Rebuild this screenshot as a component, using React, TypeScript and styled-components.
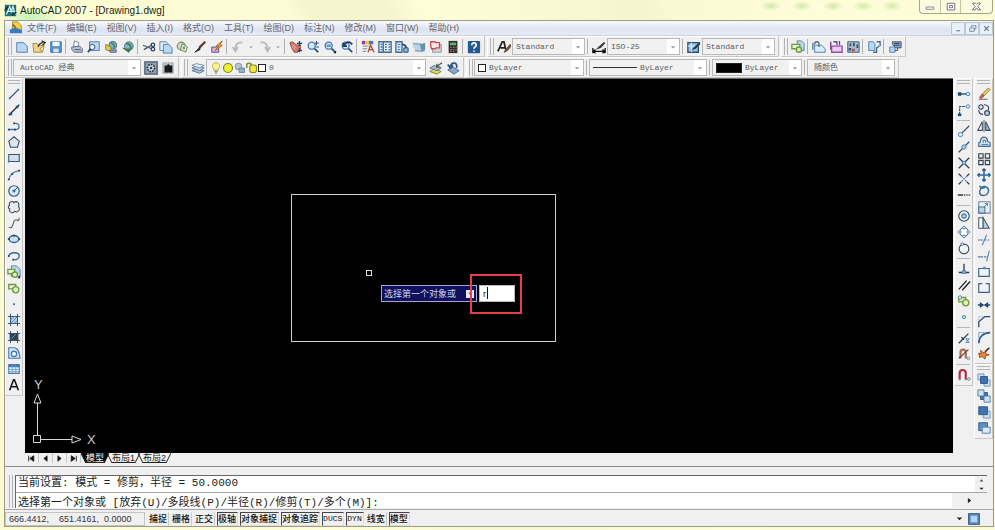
import React, { Fragment, ReactNode } from 'react';
import styled, { createGlobalStyle, css } from 'styled-components';

const UI = '"Liberation Sans", "Noto Sans CJK SC", sans-serif';
const MONO = '"Liberation Mono", "Noto Sans CJK SC", monospace';
const navy = '#24486c';
const blue = '#4379b0';
const pale = '#bcd8f0';
const green = '#6c9a3c';

const GlobalStyle = createGlobalStyle`
  *, *::before, *::after { box-sizing: border-box; }
  html, body { margin: 0; background: #fcfcd4; }
  button, select, input { font: inherit; color: inherit; margin: 0; padding: 0; border: 0; background: none; border-radius: 0; }
`;

/* ---------- icon drawings, all on a 16 x 16 grid ---------- */

const sheet = <path d="M2 3h8l4 4v7H2z" fill={pale} stroke={blue} />;
const magnifier = (
  <>
    <path d="M9 9l5 5" stroke={navy} strokeWidth="2" />
    <circle cx="6.500" cy="6.500" r="4" fill="#d8eafa" stroke={blue} strokeWidth="1.500" />
  </>
);
const blockShapes = (
  <>
    <path d="M2 4h8v5H2z" fill="#e8f4d8" stroke={green} strokeWidth="1.500" />
    <circle cx="10" cy="10" r="3.500" fill="#e2f0c8" stroke={green} strokeWidth="1.500" />
  </>
);
const hatchFrame = (
  <path d="M4 1v14M12 1v14M1 4h14M1 12h14" stroke={navy} />
);

const icons: Record<string, ReactNode> = {
  app: (
    <>
      <path d="M1 1h14v14H1z" fill="#1d6f7a" />
      <path d="M3 13L7 3l2 6 2-6 3 10M4 9h9" stroke="#d6f4f4" strokeWidth="1.500" />
      <path d="M1 8l4-5M10 14l5-4" stroke="#0b3450" strokeWidth="2" />
    </>
  ),
  drawing: (
    <>
      <path d="M4 1h6l4 4v7H4z" fill="#f4d04a" stroke="#b08820" />
      <path d="M1 10c4-3 10-3 14 1v3H1z" fill="#3b7cc0" />
      <path d="M4 4l4 4" stroke="#806818" strokeWidth="2" />
    </>
  ),
  newFile: sheet,
  open: (
    <>
      <path d="M1 4h5l1 2h6l-2 8H2z" fill="#ead58c" stroke="#9c8438" />
      <path d="M7 8c1-4 3-5 6-5M11 1l4 2-3 3" stroke="#3b3b2c" strokeWidth="1.500" />
      <path d="M9 10l5-4-2 8z" fill="#f7edb8" stroke="#9c8438" />
    </>
  ),
  save: (
    <>
      <path d="M2 2h12v12H2z" fill="#5b93c8" stroke="#2f6698" />
      <path d="M4 2h8v5H4z" fill="#eef6fc" />
      <path d="M5 10h6v4H5z" fill="#d6e4f0" />
    </>
  ),
  print: (
    <>
      <path d="M5 1l5 2-1 5H4z" fill="#fff" stroke="#68748c" />
      <path d="M2 8l9-1 3 3v4H5l-3-3z" fill="#b8bfd0" stroke="#59647e" />
      <path d="M5 11h7" stroke="#40506c" />
    </>
  ),
  preview: (
    <>
      <path d="M3 2h11v10H3z" fill={pale} stroke={blue} />
      <circle cx="6" cy="8" r="3" fill="#e8f4ff" stroke={navy} />
      <path d="M4 10l-3 4" stroke={navy} strokeWidth="2" />
    </>
  ),
  publish: (
    <>
      <circle cx="10" cy="6" r="4.500" fill="#7daed0" stroke="#3c6c94" />
      <path d="M8 3c3 1 4 3 4 6" stroke="#4a8c4a" strokeWidth="2" />
      <path d="M2 5l6 3v5l-6-2z" fill="#efc94c" stroke="#8c7424" />
      <path d="M6 12l8-1v3H7z" fill="#9aa4b4" stroke="#59647e" />
    </>
  ),
  dwf: (
    <>
      <circle cx="9" cy="7" r="5" fill="#8cb4c8" stroke="#47738c" />
      <path d="M6 4c4 0 6 3 5 7" stroke="#3f8c50" strokeWidth="2.500" />
      <path d="M2 9l7 5 1-4" fill="#4a7c50" stroke="#345c40" />
    </>
  ),
  cut: (
    <>
      <path d="M1 6l10 4M2 11l9-5" stroke="#4c5866" strokeWidth="1.500" />
      <circle cx="12.500" cy="5.500" r="2" stroke={navy} strokeWidth="1.500" />
      <circle cx="12.500" cy="10.500" r="2" stroke={navy} strokeWidth="1.500" />
    </>
  ),
  copy: (
    <>
      <path d="M1 2h7l3 3v7H1z" fill="#e6f1fa" stroke={blue} />
      <path d="M5 5h6l4 4v6H5z" fill={pale} stroke={blue} />
    </>
  ),
  paste: (
    <>
      <circle cx="6" cy="7" r="4.500" fill="#d4dcc4" stroke="#7c9464" strokeWidth="1.500" />
      <path d="M7 4l6 4-2 6-6-3z" fill="#e2e8dc" stroke="#66785c" />
      <circle cx="9" cy="9" r="1.500" fill="#7c9464" />
    </>
  ),
  match: (
    <>
      <path d="M14 2L7 9" stroke="#5c3c28" strokeWidth="2.500" />
      <path d="M8 8l-6 6 6-3z" fill="#3a2c28" stroke="#3a2c28" />
    </>
  ),
  blockEdit: (
    <>
      <path d="M2 8h8v6H2z" fill="#d0b4e0" stroke="#643c78" />
      <path d="M14 1L7 7h3l-4 5 8-6h-3z" fill="#f6c42c" stroke="#a05c10" />
    </>
  ),
  undo: <path d="M13 3C7 2 5 6 5 11M2 8l3 5 3-5" stroke="#b4b8bc" strokeWidth="2" />,
  redo: <path d="M3 3c6-1 8 3 8 8M8 8l3 5 3-5" stroke="#b4b8bc" strokeWidth="2" />,
  pan: (
    <>
      <path d="M1 3l3-1 5 4h4v5l-3 3H6L3 9z" fill="#d4786c" stroke="#964038" />
      <path d="M4 5l4 4M3 7l4 4" stroke="#f0b8ac" />
      <path d="M12 1v6M9 4h6M12 9v5M10 12h5" stroke={navy} strokeWidth="1.500" />
    </>
  ),
  zoomRt: (
    <>
      {magnifier}
      <path d="M12 1v5M10 3.500h5M11 8h4" stroke={navy} />
    </>
  ),
  zoomWin: (
    <>
      {magnifier}
      <path d="M4 5h5v3H4z" fill="#6c9cc8" />
      <path d="M15 12v3h-3z" fill="#111" />
    </>
  ),
  zoomPrev: (
    <>
      {magnifier}
      <path d="M14 5C11 1 7 2 5 6M4 3v4h4" stroke="#1d3c64" strokeWidth="2" />
    </>
  ),
  properties: (
    <>
      <path d="M1 1h4v4H1z" fill="#a03ca0" />
      <path d="M5 1h4v4H5z" fill="#e8c828" />
      <path d="M9 1h5v4H9z" fill="#4878d0" />
      <path d="M2 7h7M2 10h5M2 13h4" stroke="#6c7c90" />
      <path d="M8 14l3-8 4 8M9 11h5" stroke="#b04838" strokeWidth="1.500" />
    </>
  ),
  designCenter: (
    <>
      <path d="M1 2h14v12H1z" fill="#e2eef8" stroke="#44688c" strokeWidth="1.500" />
      <path d="M6 2v12M3 5h2M3 8h2M3 11h2M8 5h2M12 5h2M8 8h2M12 8h2M8 11h2M12 11h2" stroke="#3c6c98" strokeWidth="1.500" />
    </>
  ),
  palettes: (
    <>
      <path d="M1 2h7v12H1z" fill="#d8e8f6" stroke="#3c6c98" strokeWidth="1.500" />
      <path d="M3 5h3M3 8h3M3 11h3" stroke="#3c6c98" />
      <path d="M8 5c4 0 5 2 5 6" stroke={navy} strokeWidth="2" />
      <path d="M10 9h5v5h-5z" fill="#8cb0d0" stroke={navy} />
    </>
  ),
  sheetSet: (
    <>
      <path d="M1 3h9l5 6v5H6L1 8z" fill="#bcd4e4" />
      <path d="M1 4l9 1 4 3M3 12l10 1" stroke="#8ca8bc" strokeWidth="1.500" />
      <path d="M9 5l6-2v8l-4 2z" fill="#5f93a8" />
    </>
  ),
  markup: (
    <>
      <path d="M4 5h10v9H4z" fill="#d0d4da" stroke="#8c949c" />
      <path d="M2 2h5l1 1h4v6H8l-1 1H3L2 7z" fill="#fbe4e4" stroke="#d04850" strokeWidth="1.500" />
    </>
  ),
  calc: (
    <>
      <path d="M3 1h10v14H3z" fill="#2b3030" />
      <path d="M4.500 3h7v3h-7z" fill="#6cb070" />
      <path d="M5 8.500h1.500M8 8.500h1.500M11 8.500h1M5 11h1.500M8 11h1.500M11 11h1M5 13h1.500M8 13h1.500" stroke="#d06c60" strokeWidth="1.500" />
    </>
  ),
  help: (
    <>
      <rect x="1" y="1" width="14" height="14" rx="1" fill="#235a94" />
      <path d="M5.500 6c0-4 5.500-3 5 0 0 2-2.500 1.500-2.500 4M8 12v1.500" stroke="#fff" strokeWidth="2" />
    </>
  ),
  textStyle: (
    <>
      <path d="M1 13L6 2h2l2 9M4 9h5" stroke="#222" strokeWidth="2" />
      <path d="M15 5l-5 6-2 3 4-2 4-5z" fill="#7b5c44" stroke="#493c30" />
    </>
  ),
  dimStyle: (
    <>
      <path d="M1 9v6M15 9v6M1 13h14M4 11l-3 2 3 2M12 11l3 2-3 2" stroke="#111" strokeWidth="1.500" />
      <path d="M14 2L8 7l-4 4 6-2 5-5z" fill="#3f3b37" />
    </>
  ),
  tableStyle: (
    <>
      <path d="M1 3h12v11H1z" fill="#9cc0e4" stroke="#284c78" strokeWidth="1.500" />
      <path d="M1 7h12M5 3v11" stroke="#eef6fc" />
      <path d="M15 2L8 8l-3 4 5-2 5-5z" fill="#2c3c50" />
    </>
  ),
  insertBlock: (
    <>
      <path d="M7 1h5l3 3v8H7z" fill={pale} stroke={blue} />
      <path d="M1 5h9v5H1z" fill="#e8f4d8" stroke={green} strokeWidth="1.500" />
      <circle cx="9" cy="11" r="3" fill="#d8eab8" stroke={green} strokeWidth="1.500" />
    </>
  ),
  xref: (
    <>
      <path d="M3 6h8l4 4v4H3z" fill="#dcecf8" stroke={blue} />
      <path d="M3 5c0-4 5-4 5 0v3M1 3v8" stroke="#58708c" strokeWidth="1.500" />
    </>
  ),
  image: (
    <>
      <path d="M3 7h12v7H3z" fill="#e8d0ee" stroke="#984ca8" strokeWidth="1.500" />
      <path d="M2 2v9M5 2h4v4M12 1v5" stroke="#74408c" strokeWidth="1.500" />
    </>
  ),
  raster: (
    <>
      <path d="M2 2h13v12H2z" fill="#a8bcd0" stroke="#3d5570" />
      <path d="M4 4h2v3H4zM8 3h2v4H8zM12 5h2v4h-2zM3 9h3v3H3z" fill="#354f70" />
      <path d="M7 10h3v3H7z" fill="#b84848" />
    </>
  ),
  link: (
    <>
      <path d="M2 2h5l2 2v8H2z" fill={pale} stroke={blue} />
      <path d="M11 2h4v5M7 14h4V9l3-2" stroke="#4a6c90" strokeWidth="1.500" />
    </>
  ),
  overlayLink: (
    <>
      <path d="M5 2h10v7H9L5 5z" fill="#8ca0bc" stroke="#3f5474" />
      <path d="M2 8h6v6H2z" fill={pale} stroke={blue} />
      <path d="M8 12h3V9M7 4h6M7 6h6" stroke="#283c58" />
    </>
  ),
  gear: (
    <>
      <path d="M1 1h14v14H1z" fill="#8fa4b8" stroke="#4a5a6c" strokeWidth="1.500" />
      <circle cx="8" cy="8" r="4" fill="#d8e0e8" stroke="#2f3f50" strokeWidth="2" strokeDasharray="2 1" />
      <circle cx="8" cy="8" r="1.500" fill="#2f3f50" />
    </>
  ),
  workspaceSave: (
    <>
      <path d="M2 2h12v12H2z" fill="#c0c4c8" stroke="#787c80" strokeDasharray="1 1" />
      <path d="M4 5h3l1-2 2 2h3v8H4z" fill="#16181a" />
    </>
  ),
  layers: (
    <>
      <path d="M1 11l5-2 9 2-5 3z" fill="#a8c4dc" stroke="#54748c" />
      <path d="M1 8l5-2 9 2-5 3z" fill="#c4d8ea" stroke="#54748c" />
      <path d="M1 5l5-2 9 2-5 3z" fill="#e4f0fa" stroke="#6888a0" />
    </>
  ),
  bulb: (
    <>
      <path d="M5 9C1 5 4 1 8 1s7 4 3 8v2H5z" fill="#fbf390" stroke="#a89834" />
      <path d="M6 13h4M7 15h2" stroke="#686850" strokeWidth="1.500" />
    </>
  ),
  sun: <circle cx="8" cy="8" r="6" fill="#f2ee30" stroke="#7c8420" strokeWidth="1.500" />,
  freeze: (
    <>
      <circle cx="6" cy="6" r="4.500" fill="#b4c4d0" stroke="#6e8498" />
      <path d="M7 8h7v6H7z" fill="#94b0c8" stroke="#58789a" />
    </>
  ),
  lock: (
    <>
      <path d="M1 8V4c0-3 6-3 6 0v4" stroke="#8b8c28" strokeWidth="2" />
      <rect x="5" y="4" width="9" height="10" rx="3" fill="#f0ea38" stroke="#8b8c28" strokeWidth="1.500" />
    </>
  ),
  layerCurrent: (
    <>
      <path d="M1 12l5-3 8 3-5 3z" fill="#e0d45c" stroke="#847c30" />
      <path d="M1 8l5-3 8 3-5 3z" fill="#9cb8d0" stroke="#54748c" />
      <path d="M15 2L9 6M9 3v4h4" stroke="#505a40" strokeWidth="1.500" />
    </>
  ),
  layerPrev: (
    <>
      <path d="M2 10l6-3 7 4-6 4z" fill="#8ca8c8" stroke="#42607e" />
      <path d="M12 8C14 2 7 0 5 6M2 4l3 4 3-3" stroke="#2f5582" strokeWidth="2" />
    </>
  ),
  line: (
    <>
      <path d="M3 13L13 3" stroke={navy} strokeWidth="1.400" />
      <path d="M2 12h2v2H2zM12 2h2v2h-2z" fill={blue} />
    </>
  ),
  xline: (
    <>
      <path d="M2 14L14 2" stroke="#222" strokeWidth="1.500" />
      <path d="M3 11h3v3H3zM10 3h3v3h-3z" fill="#1f5a96" />
    </>
  ),
  pline: (
    <>
      <path d="M2 12h8c5 0 5-7 0-7H8" stroke={blue} strokeWidth="1.500" />
      <path d="M1 11h2v2H1zM8 11h2v2H8zM7 4h2v2H7z" fill={navy} />
    </>
  ),
  polygon: <path d="M8 2l6 5-2 7H4L2 7z" fill="#dce8f0" stroke="#35485c" strokeWidth="1.200" />,
  rect: (
    <>
      <path d="M2 4h12v8H2z" fill="#d0e0ee" stroke="#35587c" strokeWidth="1.200" />
      <path d="M1 11h2v2H1zM13 3h2v2h-2z" fill={blue} />
    </>
  ),
  arc: (
    <>
      <path d="M2 14C3 7 7 4 14 3" stroke={blue} strokeWidth="1.300" />
      <path d="M1 12h2v2H1zM5 6h2v2H5zM13 2h2v2h-2z" fill={navy} />
    </>
  ),
  circle: (
    <>
      <circle cx="8" cy="8" r="6" fill="#dcebf8" stroke="#36608a" strokeWidth="1.400" />
      <path d="M8 8l4-4M7 7h2v2H7z" stroke={navy} />
    </>
  ),
  cloud: <path d="M3 6c-2-5 5-5 5-3 3-3 7 1 5 4 3 4-1 8-4 6-3 3-7 1-6-3-2 0-2-3 0-4z" fill="#e6ecf0" stroke="#3d4b58" strokeWidth="1.200" />,
  spline: <path d="M2 13c3 1 4 0 5-4s3-6 5-4c1 1 2-1 2-3" stroke="#48586c" strokeWidth="1.200" />,
  ellipse: (
    <>
      <ellipse cx="8" cy="8" rx="5.500" ry="4" fill="#c4e0f4" stroke="#2e587e" strokeWidth="1.500" />
      <path d="M1 7h2v2H1zM13 7h2v2h-2zM7 3h2v2H7z" fill={navy} />
    </>
  ),
  ellipseArc: (
    <>
      <path d="M2 8c1-5 12-5 12 0 0 4-5 5-7 4" stroke="#3a6894" strokeWidth="1.500" />
      <path d="M1 7h2v2H1zM6 11h2v2H6z" fill={navy} />
    </>
  ),
  insert: (
    <>
      <path d="M5 1h6l4 4v8H5z" fill={pale} stroke={blue} />
      <path d="M1 5h8v5H1z" fill="#e4f2cc" stroke={green} strokeWidth="1.500" />
      <circle cx="9" cy="11" r="3" fill="#e4f2cc" stroke={green} strokeWidth="1.500" />
      <path d="M15 12v3h-3z" fill="#111" />
    </>
  ),
  block: blockShapes,
  point: <path d="M7 7h2v2H7z" fill="#2c68a4" />,
  hatch: (
    <>
      <path d="M4 4h8v8H4z" fill="#b4d4f0" />
      {hatchFrame}
      <path d="M4 8l4-4M4 12l8-8M8 12l4-4" stroke={blue} />
    </>
  ),
  gradient: (
    <>
      <path d="M3 4h10v8H3z" fill="#32404c" />
      {hatchFrame}
      <path d="M5 10l5-5" stroke="#8ca0b0" />
    </>
  ),
  region: (
    <>
      <path d="M2 2h7c4 1 5 5 6 12H2z" fill="#d4e6f6" stroke={blue} strokeWidth="1.200" />
      <circle cx="8" cy="9" r="3" fill="#fff" stroke={blue} strokeWidth="1.500" />
    </>
  ),
  table: (
    <>
      <path d="M2 3h12v10H2z" fill="#eef6fc" stroke={blue} strokeWidth="1.200" />
      <path d="M2 3h12v3H2z" fill={blue} />
      <path d="M6 3v10M10 3v10M2 8.500h12M2 11h12" stroke="#6c9cc8" />
    </>
  ),
  mtext: <path d="M3 14L7.500 2h1L13 14M5 10h6" stroke="#161616" strokeWidth="1.800" />,
  tracking: (
    <>
      <path d="M3 8h8" stroke={navy} strokeWidth="1.500" />
      <path d="M1 6h4v4H1z" fill={navy} />
      <circle cx="12.500" cy="8" r="2" fill="#d8ecfc" stroke={blue} />
    </>
  ),
  from: (
    <>
      <path d="M3 13V4h8" stroke={navy} strokeWidth="1.300" strokeDasharray="3 1" />
      <path d="M1 12h4v3H1z" fill={navy} />
      <circle cx="12.500" cy="4" r="2" fill="#d8ecfc" stroke={blue} />
    </>
  ),
  endpoint: (
    <>
      <path d="M5 11l9-9" stroke="#36506a" strokeWidth="1.400" />
      <circle cx="4" cy="12" r="2.500" fill="#d8ecfc" stroke={blue} />
    </>
  ),
  midpoint: (
    <>
      <path d="M2 14L14 2" stroke="#36506a" strokeWidth="1.500" />
      <circle cx="8" cy="8" r="2.500" fill="#a8cce8" stroke={blue} />
    </>
  ),
  intersect: (
    <>
      <path d="M2 2l12 12M14 2L2 14" stroke="#2c3c4c" strokeWidth="1.500" />
      <circle cx="8" cy="8" r="2" fill="#a8cce8" stroke={blue} />
    </>
  ),
  apparent: (
    <>
      <path d="M2 2l3 3M11 11l3 3M14 2l-3 3M5 11l-3 3" stroke="#2c3c4c" strokeWidth="1.500" />
      <path d="M5 5l6 6M11 5l-6 6" stroke={blue} strokeWidth="1.300" strokeDasharray="2 1" />
    </>
  ),
  extension: <path d="M1 8h6M8 8h1M10 8h1M12 8h1M14 8h1" stroke="#333" strokeWidth="1.500" />,
  center: (
    <>
      <circle cx="8" cy="8" r="6" fill="#eef4f8" stroke="#334a60" strokeWidth="1.300" />
      <circle cx="8" cy="8" r="2.500" fill="#b4d4ec" stroke={blue} strokeWidth="1.300" />
    </>
  ),
  quadrant: (
    <>
      <circle cx="8" cy="8" r="5" fill="#fff" stroke={navy} />
      <path d="M8 1l2 2-2 2-2-2zM8 11l2 2-2 2-2-2zM3 6l2 2-2 2-2-2zM13 6l2 2-2 2-2-2z" fill={pale} stroke={blue} />
    </>
  ),
  tangent: (
    <>
      <circle cx="8" cy="9" r="5.500" fill="#f2f4f4" stroke="#3c4c5c" strokeWidth="1.300" />
      <circle cx="6" cy="3.500" r="1.500" fill="#d8ecfc" stroke={blue} />
    </>
  ),
  perpendicular: (
    <>
      <path d="M8 2v9M2 12h12" stroke="#2c3c4c" strokeWidth="1.500" />
      <path d="M6 10h4v3H6z" fill="#88b4dc" stroke={blue} />
    </>
  ),
  parallel: <path d="M2 13L11 3M6 14L15 4" stroke="#222" strokeWidth="1.500" />,
  insertion: (
    <>
      {blockShapes}
      <circle cx="3.500" cy="4" r="2" fill="#d8ecfc" stroke={blue} />
    </>
  ),
  node: <circle cx="8" cy="8" r="1.700" fill="#d8f0fa" stroke="#468ca8" strokeWidth="1.200" />,
  nearest: (
    <>
      <path d="M2 14L13 3M5 7l3 3" stroke="#2c3c4c" strokeWidth="1.500" />
      <path d="M10 9l4 4M14 9l-4 4M10 9h4M10 13h4" stroke={blue} />
    </>
  ),
  snapNone: (
    <>
      <path d="M4 13V6c0-4 6-4 6 0v7" stroke="#b06c58" strokeWidth="2.500" />
      <path d="M2 13L13 3" stroke="#683c34" strokeWidth="1.500" />
      <circle cx="13" cy="13" r="1.500" stroke="#468ca8" />
    </>
  ),
  magnet: (
    <>
      <path d="M3 13V6c0-5 7-5 7 0v7" stroke="#b42c40" strokeWidth="2.500" />
      <path d="M2 12h2v2H2zM9 12h2v2H9z" fill="#7c8c94" />
      <circle cx="13.500" cy="12.500" r="1.500" stroke="#468c88" />
    </>
  ),
  erase: (
    <>
      <path d="M13 1L6 8l2 2 7-7z" fill="#e8d05c" stroke="#8c7838" />
      <path d="M6 8l-3 4 2 1 3-3z" fill="#d46464" stroke="#843c3c" />
      <path d="M2 14h10" stroke="#684c44" />
    </>
  ),
  copyObj: (
    <>
      <circle cx="4.500" cy="4.500" r="2.500" fill="#e8f0f6" stroke="#35485c" strokeWidth="1.300" />
      <circle cx="11.500" cy="11.500" r="2.800" fill="#b4d0e8" stroke="#35485c" strokeWidth="1.300" />
      <path d="M8 2c5 0 6 3 5 6M2 8c0 4 2 5 5 5" stroke="#35485c" strokeWidth="1.300" />
    </>
  ),
  mirror: (
    <>
      <path d="M6 3v10H1z" fill="#fff" stroke="#35485c" strokeWidth="1.200" />
      <path d="M10 3v10h5z" fill="#9cbcd8" stroke="#35485c" strokeWidth="1.200" />
      <path d="M8 1v14" stroke="#35485c" />
    </>
  ),
  offset: (
    <>
      <path d="M2 13V9c2 0 2-1 2-3 1-5 8-5 8 1l3 2v4z" fill="#cfe2f2" stroke="#446c94" strokeWidth="1.300" />
      <path d="M5 11h8M7 9V6h3v3" stroke="#446c94" />
    </>
  ),
  array: (
    <path d="M2 2h5v5H2zM9.500 2h5v5h-5zM2 9.500h5v5H2zM9.500 9.500h5v5h-5z" fill="#e6eaee" stroke="#34424e" strokeWidth="1.300" />
  ),
  move: <path d="M8 1v14M1 8h14M6 3l2-2 2 2M6 13l2 2 2-2M3 6L1 8l2 2M13 6l2 2-2 2" stroke="#32699c" strokeWidth="1.800" />,
  rotate: <path d="M5 4c5-3 9 1 8 5-2 6-10 5-10 0 0-2 1-3 2-5M3 2l2 3 4-1" stroke="#3a6c96" strokeWidth="1.700" />,
  scale: (
    <>
      <path d="M2 2h13v13H2z" fill="#e8f0f6" stroke="#6e8ca4" strokeWidth="1.200" />
      <path d="M2 8h7v7H2z" fill="#bcd4e8" stroke="#4d7498" strokeWidth="1.200" />
      <path d="M8 8l4-4M9 4h3v3" stroke="#4d7498" />
    </>
  ),
  stretch: (
    <>
      <path d="M2 2h5v12H2z" fill="#fff" stroke="#46586a" strokeWidth="1.200" />
      <path d="M7 2l7 12H7z" fill="#b4d0e8" stroke="#46586a" strokeWidth="1.200" />
    </>
  ),
  trim: <path d="M1 8h6M9 8h2M12 8h2M6 14L11 2" stroke="#5583ac" strokeWidth="1.200" />,
  extend: <path d="M1 9h6M8 9h3M11 14L14 2" stroke="#5583ac" strokeWidth="1.200" />,
  breakPoint: (
    <>
      <path d="M2 4h12v9H2z" fill="#eef4fa" stroke="#3f6184" strokeWidth="1.300" />
      <path d="M7 2h3v3H7z" fill="#5b93c8" />
    </>
  ),
  breakObj: <path d="M6 3H2v10h12V3h-4" fill="#eef4fa" stroke="#3f6184" strokeWidth="1.300" />,
  join: <path d="M1 8h5M10 8h5M4 6l3 2-3 2zM12 6L9 8l3 2z" fill={navy} stroke={navy} strokeWidth="1.500" />,
  chamfer: (
    <>
      <path d="M2 15V9l7-6h6" stroke={navy} strokeWidth="1.400" />
      <path d="M2 7V3h5" stroke="#6c9cc8" strokeDasharray="1 1" />
    </>
  ),
  fillet: (
    <>
      <path d="M2 15C2 8 7 3 15 3" stroke="#2f5f90" strokeWidth="1.800" />
      <path d="M2 9V3h6" stroke="#6c9cc8" />
    </>
  ),
  explode: (
    <>
      <path d="M2 8l3 1-1-4 4 3 2-3v4l4 1-4 1-1 4-3-3-3 1z" fill="#e88c38" stroke="#8c4420" />
      <path d="M10 6l4-4" stroke="#3a3028" strokeWidth="2" />
    </>
  ),
  front: (
    <>
      <path d="M1 1h7v7H1zM8 8h7v7H8z" fill="#cfe0f0" stroke="#6c92b8" />
      <path d="M4 4h8v8H4z" fill="#3f74b0" stroke="#2b5384" />
    </>
  ),
  back: (
    <>
      <path d="M4 4h8v8H4z" fill="#3f74b0" stroke="#2b5384" />
      <path d="M1 1h7v7H1zM8 8h7v7H8z" fill="#cfe0f0" stroke="#4d78a4" />
    </>
  ),
  above: (
    <>
      <path d="M7 7h8v8H7z" fill="#cfe0f0" stroke="#6c92b8" />
      <path d="M2 2h10v9H2z" fill="#3f74b0" stroke="#2b5384" />
    </>
  ),
  under: (
    <>
      <path d="M2 2h10v9H2z" fill="#5f92c8" stroke="#2b5384" />
      <path d="M6 7h9v7H6z" fill="#dceaf6" stroke="#4d78a4" />
    </>
  ),
  caret: <path d="M5 7h6l-3 3z" fill="#9a9a9a" />,
  minimize: <path d="M3 8h10v3H3z" fill="#fff" stroke="#686868" />,
  maximize: <path d="M3 3h10v9H3zM6 6h4v3H6z" fill="#fff" stroke="#686868" strokeWidth="1.200" />,
  close: <path d="M2 3h4l2 2 2-2h4l-4 5 4 5h-4l-2-3-2 3H2l4-5z" fill="#fff" stroke="#606060" strokeWidth="1.200" />,
  mdiMin: <path d="M4 12h7" stroke="#64809c" strokeWidth="2" />,
  mdiRestore: <path d="M6 6V3h8v6h-3M3 7h8v6H3z" stroke="#64809c" strokeWidth="1.500" />,
  mdiClose: <path d="M4 4l8 8M12 4l-8 8" stroke="#64809c" strokeWidth="2" />,
  first: <path d="M3 3v10M12 3v10L5 8z" fill="#111" stroke="#111" strokeWidth="1.500" />,
  prev: <path d="M11 3v10L5 8z" fill="#111" stroke="#111" />,
  next: <path d="M5 3v10l6-5z" fill="#111" stroke="#111" />,
  last: <path d="M13 3v10M4 3v10l7-5z" fill="#111" stroke="#111" strokeWidth="1.500" />,
  up: <path d="M4 10h8L8 5z" fill="#444" />,
  down: <path d="M3 6h10l-5 5z" fill="#222" />,
  tray: (
    <>
      <path d="M1 1h14v14H1z" fill="#6c9cd0" stroke="#28486c" strokeWidth="1.500" />
      <path d="M4 4h8v8H4z" fill="#b4d4f4" />
    </>
  ),
};

const Glyph = styled.svg<{ $size: number }>`
  width: ${(p) => p.$size}px;
  height: ${(p) => p.$size}px;
  flex: none;
  display: block;
`;

const Icon = ({ name, size = 14 }: { name: string; size?: number }) => (
  <Glyph $size={size} viewBox="0 0 16 16" fill="none" aria-hidden="true">
    {icons[name]}
  </Glyph>
);

/* ---------- window frame ---------- */

const Frame = styled.div`
  min-height: 100vh;
  display: flex;
  flex-direction: column;
  padding: 0 1px 3px 4px;
  background: linear-gradient(100deg, #fbfcd2 0%, #fdfdd6 40%, #f8f7d2 55%, #fefdd8 75%, #fafbd2 100%);
`;

const blob = (x: number) => `radial-gradient(ellipse 10px 5px at calc(100% - ${x}px) 6px, #d2e8a8, transparent)`;

const TitleBar = styled.header`
  height: 20px;
  display: flex;
  align-items: center;
  gap: 3px;
  background:
    ${[223, 192, 161, 131, 102].map(blob).join(',')},
    radial-gradient(ellipse 30px 9px at 26px 17px, #c2f4b4, transparent),
    linear-gradient(60deg, transparent 29%, #f6f5ce 31% 39%, transparent 42% 60%, #f6f5ce 62% 65%, transparent 67%);
`;

const Title = styled.h1`
  margin: 0;
  flex: 1;
  font: 400 10px ${UI};
  color: #1c1c14;
`;

const CaptionButtons = styled.div`
  align-self: flex-start;
  display: flex;
  height: 14px;
  margin-right: 1px;
  border: 1px solid #a8a98c;
  border-top: 0;
  border-radius: 0 0 4px 4px;
  background: #fbfbe2;
`;

const CaptionButton = styled.button<{ $wide?: boolean }>`
  width: ${(p) => (p.$wide ? 32 : 20)}px;
  display: grid;
  place-items: center;
  & + & { border-left: 1px solid #c4c4a4; }
`;

const Client = styled.main`
  flex: 1;
  display: flex;
  flex-direction: column;
  border: 1px solid #9c9c88;
  background: #f0f0f0;
  font-family: ${UI};
`;

const MenuBar = styled.nav`
  height: 15px;
  display: flex;
  align-items: center;
  padding-left: 4px;
  background: linear-gradient(#f8f9fc, #dfe4f3 60%, #e7eaf5);
  border-bottom: 1px solid #cfd2dc;
`;

const MenuItems = styled.div`
  flex: 1;
  display: flex;
  align-items: center;
  gap: 10px;
  padding-left: 4px;
`;

const MenuButton = styled.button`
  font: 9px/14px ${UI};
  color: #64666c;
  white-space: nowrap;
`;

const MdiButton = styled.button`
  width: 14px;
  height: 13px;
  display: grid;
  place-items: center;
  border: 1px solid #b8c8da;
  background: #e8f1fa;
`;

/* ---------- toolbars ---------- */

const ToolbarRow = styled.div`
  height: 21px;
  display: flex;
  gap: 2px;
`;

const Toolbar = styled.div<{ $vertical?: boolean }>`
  display: flex;
  align-items: center;
  border: 1px solid #c6c6c6;
  border-top-color: #fff;
  border-left-color: #fff;
  ${(p) =>
    p.$vertical
      ? css`
          flex-direction: column;
          align-items: stretch;
          padding: 0 1px 2px;
        `
      : css`
          padding: 0 2px;
        `}
`;

const Grip = styled.i<{ $vertical?: boolean }>`
  flex: none;
  ${(p) =>
    p.$vertical
      ? css`
          height: 4px;
          margin: 1px 1px 2px;
          border-top: 1px solid #b4b4b4;
          border-bottom: 1px solid #b4b4b4;
        `
      : css`
          width: 4px;
          height: 17px;
          margin-right: 1px;
          border-left: 1px solid #b4b4b4;
          border-right: 1px solid #b4b4b4;
        `}
`;

const Separator = styled.i<{ $vertical?: boolean }>`
  flex: none;
  ${(p) =>
    p.$vertical
      ? css`
          height: 1px;
          margin: 2px 1px;
          background: #b8b8b8;
        `
      : css`
          width: 1px;
          height: 15px;
          margin: 0 2px 0 1px;
          background: #b0b0b0;
        `}
`;

const ToolButton = styled.button<{ $vertical?: boolean; $narrow?: boolean }>`
  flex: none;
  width: ${(p) => (p.$vertical ? 'auto' : p.$narrow ? '10px' : '17px')};
  height: ${(p) => (p.$vertical ? 16 : 18)}px;
  display: grid;
  place-items: center;
`;

const Groups = styled.div<{ $gap: number }>`
  display: flex;
  flex-direction: column;
  gap: ${(p) => p.$gap}px;
`;

const Group = styled.div`
  display: flex;
  flex-direction: column;
`;

const ComboBox = styled.label<{ $width: number; $indent?: boolean }>`
  flex: none;
  width: ${(p) => p.$width}px;
  height: 17px;
  display: flex;
  align-items: center;
  padding-left: ${(p) => (p.$indent ? 6 : 3)}px;
  margin-right: 1px;
  border: 1px solid #b8b8b8;
  background: #f1f1f1;
  font: 8px/15px ${MONO};
  color: #5c5c5c;
`;

const Select = styled.select`
  flex: 1;
  min-width: 0;
  height: 15px;
  appearance: none;
  outline: 0;
  &:not(:first-child) { padding-left: 3px; }
`;

const Arrow = styled.span`
  width: 12px;
  height: 15px;
  display: grid;
  place-items: center;
  background: #fff;
`;

const Swatch = styled.i<{ $black?: boolean }>`
  flex: none;
  width: ${(p) => (p.$black ? 26 : 8)}px;
  height: ${(p) => (p.$black ? 10 : 8)}px;
  border: 1px solid #222;
  background: ${(p) => (p.$black ? '#000' : '#fff')};
`;

const LineSample = styled.i`
  flex: none;
  width: 44px;
  height: 1px;
  background: #333;
`;

interface ComboProps {
  label: string;
  value: string;
  width: number;
  indent?: boolean;
  children?: ReactNode;
}

const Combo = ({ label, value, width, indent, children }: ComboProps) => (
  <ComboBox $width={width} $indent={indent}>
    {children}
    <Select aria-label={label} defaultValue={value}>
      <option>{value}</option>
    </Select>
    <Arrow><Icon name="caret" size={12} /></Arrow>
  </ComboBox>
);

const Tools = ({ names, vertical }: { names: string[]; vertical?: boolean }) => (
  <>
    {names.map((name, i) =>
      name === '|' ? (
        <Separator key={i} $vertical={vertical} />
      ) : (
        <ToolButton key={i} type="button" aria-label={name} $vertical={vertical} $narrow={name === 'caret'}>
          <Icon name={name} size={name === 'caret' ? 10 : 14} />
        </ToolButton>
      ),
    )}
  </>
);

const GroupedTools = ({ groups }: { groups: string[][] }) => (
  <Groups $gap={1}>
    {groups.map((names) => (
      <Group key={names[0]}><Tools names={names} vertical /></Group>
    ))}
  </Groups>
);

/* ---------- workspace ---------- */

const Workspace = styled.div`
  flex: 1;
  display: flex;
`;

const Dock = styled.aside<{ $left?: boolean }>`
  flex: none;
  width: 20px;
  padding: ${(p) => (p.$left ? '0 2px 0 0' : '0 0 0 1px')};
`;

const Center = styled.section`
  flex: 1;
  min-width: 0;
  display: flex;
  flex-direction: column;
`;

const Canvas = styled.div`
  flex: 1;
  position: relative;
  overflow: hidden;
  background: #000;
  border-top: 1px solid #666;
`;

const DrawnRectangle = styled.div`
  position: absolute;
  left: 266px;
  top: 115px;
  width: 265px;
  height: 148px;
  border: 1px solid #cfcfcf;
`;

const PickBox = styled.div`
  position: absolute;
  left: 341px;
  top: 191px;
  width: 6px;
  height: 6px;
  border: 1px solid #ddd;
`;

const DynamicPrompt = styled.label`
  position: absolute;
  left: 356px;
  top: 206px;
  display: flex;
  gap: 2px;
  height: 17px;
`;

const PromptText = styled.span`
  width: 96px;
  display: flex;
  align-items: center;
  justify-content: space-between;
  padding: 0 2px;
  border: 1px solid #a4a4d0;
  background: #10105c;
  color: #d4d4e8;
  font: 9px/14px ${UI};
`;

const PromptKey = styled.i`
  width: 8px;
  height: 8px;
  display: grid;
  place-items: center;
  background: #e8e8f8;
`;

const PromptInput = styled.input`
  width: 36px;
  background: #fff;
  border: 1px solid #bbb;
  padding-left: 3px;
  color: #111;
  font: 9px/14px ${UI};
  outline: 0;
`;

const Caret = styled.i`
  position: absolute;
  left: 106px;
  top: 2px;
  width: 1px;
  height: 12px;
  background: #111;
`;

const Highlight = styled.div`
  position: absolute;
  left: 445px;
  top: 195px;
  width: 52px;
  height: 40px;
  border: 2px solid #e4404a;
`;

const UcsIcon = styled.svg`
  position: absolute;
  left: 5px;
  bottom: 5px;
  width: 70px;
  height: 72px;
`;

const TabRow = styled.div`
  height: 13px;
  display: flex;
  align-items: flex-start;
`;

const TabArrow = styled.button`
  width: 14px;
  height: 10px;
  display: grid;
  place-items: center;
  border-right: 1px solid #c8c8c8;
`;

const Tab = styled.button<{ $active?: boolean }>`
  height: 10px;
  display: flex;
  font: 9px/10px ${UI};
  color: ${(p) => (p.$active ? '#fff' : '#222')};
  margin-right: -2px;
`;

const TabLabel = styled.span<{ $active?: boolean }>`
  height: 10px;
  overflow: hidden;
  background: ${(p) => (p.$active ? '#000' : 'transparent')};
  border-bottom: 1px solid #222;
`;

const Slant = styled.svg`
  width: 5px;
  height: 10px;
`;

const SheetTab = ({ label, active }: { label: string; active?: boolean }) => (
  <Tab type="button" $active={active}>
    <Slant viewBox="0 0 5 10" fill={active ? '#000' : 'none'} stroke="#222"><path d="M0 0L5 10V0" strokeWidth={active ? 1 : 0} /><path d="M0 0L5 10" /></Slant>
    <TabLabel $active={active}>{label}</TabLabel>
    <Slant viewBox="0 0 5 10" fill={active ? '#000' : 'none'} stroke="#222"><path d="M5 0L0 10V0" strokeWidth={active ? 1 : 0} /><path d="M5 0L0 10" /></Slant>
  </Tab>
);

/* ---------- command window and status bar ---------- */

const CommandPane = styled.section`
  display: flex;
  gap: 2px;
  padding: 8px 6px 1px 4px;
  border-top: 1px solid #8c8c8c;
  border-bottom: 1px solid #a8a8a8;
`;

const CommandGrip = styled.i`
  width: 4px;
  border-left: 1px solid #b4b4b4;
  border-right: 1px solid #b4b4b4;
`;

const CommandBody = styled.div`
  flex: 1;
  display: flex;
  flex-direction: column;
  border-left: 1px solid #666;
  border-top: 1px solid #666;
  font: 11px/14px ${MONO};
  color: #222;
`;

const CommandLine = styled.div`
  display: flex;
  background: #fff;
  & + & { border-top: 1px solid #a8a8a8; }
`;

const CommandText = styled.output`
  flex: 1;
  height: 16px;
  padding: 0 0 0 2px;
  line-height: 14px;
  white-space: pre;
  overflow: hidden;
`;

const CommandInput = styled.input`
  flex: 1;
  min-width: 0;
  height: 15px;
  padding-left: 2px;
  outline: 0;
`;

const ScrollButtons = styled.div<{ $wide?: boolean }>`
  width: ${(p) => (p.$wide ? 35 : 12)}px;
  display: flex;
  flex-direction: column;
  align-items: center;
  background: #f0f0f0;
`;

const ScrollButton = styled.button`
  height: 8px;
  flex: 1;
  display: grid;
  place-items: center;
`;

const StatusBar = styled.footer`
  height: 16px;
  display: flex;
  align-items: center;
  gap: 2px;
  padding: 1px 13px 0 0;
`;

const Coordinates = styled.output`
  width: 140px;
  height: 14px;
  display: flex;
  padding-left: 3px;
  margin-right: 1px;
  border: 1px solid #c4c4c4;
  font: 9px/12px ${UI};
  color: #333;
  white-space: pre;
`;

const StatusToggle = styled.button<{ $on?: boolean; $latin?: boolean }>`
  height: 14px;
  padding: 0 1px 0 0;
  border: 1px solid;
  border-color: ${(p) => (p.$on ? '#444 #ddd #ddd #444' : '#f0f0f0 #c8c8c8 #f0f0f0 #f0f0f0')};
  font: ${(p) => (p.$latin ? `8px/12px ${MONO}` : `500 9px/12px ${UI}`)};
  color: #111;
  white-space: nowrap;
`;

const Tray = styled.div`
  flex: 1;
  display: flex;
  justify-content: flex-end;
  align-items: center;
  gap: 4px;
`;

const menus = ['文件(F)', '编辑(E)', '视图(V)', '插入(I)', '格式(O)', '工具(T)', '绘图(D)', '标注(N)', '修改(M)', '窗口(W)', '帮助(H)'];

const standardTools = [
  'newFile', 'open', 'save', '|', 'print', 'preview', 'publish', 'dwf', '|',
  'cut', 'copy', 'paste', 'match', 'blockEdit', '|', 'undo', 'caret', 'redo', 'caret', '|',
  'pan', 'zoomRt', 'zoomWin', 'zoomPrev', '|',
  'properties', 'designCenter', 'palettes', 'sheetSet', 'markup', 'calc', '|', 'help',
];

const styleCombos = [
  { icon: 'textStyle', label: '文字样式', value: 'Standard' },
  { icon: 'dimStyle', label: '标注样式', value: 'ISO-25' },
  { icon: 'tableStyle', label: '表格样式', value: 'Standard' },
];

const drawTools = [
  ['line', 'xline', 'pline', 'polygon', 'rect'],
  ['arc', 'circle', 'cloud', 'spline', 'ellipse'],
  ['ellipseArc', 'insert', 'block', 'point', 'hatch'],
  ['gradient', 'region', 'table', 'mtext'],
];

const snapTools = [
  'tracking', 'from', '|', 'endpoint', 'midpoint', 'intersect', 'apparent', 'extension', '|',
  'center', 'quadrant', 'tangent', '|', 'perpendicular', 'parallel', 'insertion', 'node', '|',
  'nearest', 'snapNone', '|', 'magnet',
];

const modifyTools = [
  ['erase', 'copyObj', 'mirror', 'offset'],
  ['array', 'move', 'rotate', 'scale', 'stretch'],
  ['trim', 'extend', 'breakPoint', 'breakObj'],
  ['join', 'chamfer', 'fillet', 'explode'],
];

const toggles = [
  { label: '捕捉' }, { label: '栅格' }, { label: '正交' },
  { label: '极轴', on: true }, { label: '对象捕捉', on: true }, { label: '对象追踪', on: true },
  { label: 'DUCS', on: true, latin: true }, { label: 'DYN', on: true, latin: true },
  { label: '线宽' }, { label: '模型', on: true },
];

export default function App() {
  return (
    <Frame>
      <GlobalStyle />
      <TitleBar>
        <Icon name="app" size={13} />
        <Title>AutoCAD 2007 - [Drawing1.dwg]</Title>
        <CaptionButtons>
          <CaptionButton type="button" aria-label="最小化"><Icon name="minimize" size={12} /></CaptionButton>
          <CaptionButton type="button" aria-label="最大化"><Icon name="maximize" size={12} /></CaptionButton>
          <CaptionButton type="button" aria-label="关闭" $wide><Icon name="close" size={11} /></CaptionButton>
        </CaptionButtons>
      </TitleBar>

      <Client>
        <MenuBar>
          <Icon name="drawing" size={14} />
          <MenuItems>
            {menus.map((m) => <MenuButton key={m} type="button">{m}</MenuButton>)}
          </MenuItems>
          {['mdiMin', 'mdiRestore', 'mdiClose'].map((n) => (
            <MdiButton key={n} type="button" aria-label={n}><Icon name={n} size={9} /></MdiButton>
          ))}
        </MenuBar>

        <ToolbarRow>
          <Toolbar>
            <Grip />
            <Tools names={standardTools} />
          </Toolbar>
          <Toolbar>
            <Grip />
            {styleCombos.map((s, i) => (
              <Fragment key={s.label}>
                {i > 0 && <Separator />}
                <ToolButton type="button" aria-label={s.label}><Icon name={s.icon} /></ToolButton>
                <Combo label={s.label} value={s.value} width={73} />
              </Fragment>
            ))}
          </Toolbar>
          <Toolbar>
            <Grip />
            <Tools names={['insertBlock', '|', 'xref', 'image', 'raster', '|', 'link', '|', 'overlayLink']} />
          </Toolbar>
        </ToolbarRow>

        <ToolbarRow>
          <Toolbar>
            <Grip />
            <Combo label="工作空间" value="AutoCAD 经典" width={128} indent />
            <Tools names={['gear', 'workspaceSave']} />
          </Toolbar>
          <Toolbar>
            <Grip />
            <Tools names={['layers']} />
            <Combo label="图层" value="0" width={220}>
              <Icon name="bulb" size={12} />
              <Icon name="sun" size={12} />
              <Icon name="freeze" size={12} />
              <Icon name="lock" size={12} />
              <Swatch />
            </Combo>
            <Tools names={['layerCurrent', 'layerPrev']} />
          </Toolbar>
          <Toolbar>
            <Grip />
            <Combo label="颜色" value="ByLayer" width={110}><Swatch /></Combo>
            <Separator />
            <Combo label="线型" value="ByLayer" width={118}><LineSample /></Combo>
            <Separator />
            <Combo label="线宽" value="ByLayer" width={90}><Swatch $black /></Combo>
            <Separator />
            <Combo label="打印样式" value="随颜色" width={88} indent />
          </Toolbar>
        </ToolbarRow>

        <Workspace>
          <Dock $left>
            <Toolbar $vertical>
              <Grip $vertical />
              <GroupedTools groups={drawTools} />
            </Toolbar>
          </Dock>
          <Center>
            <Canvas>
              <DrawnRectangle />
              <PickBox />
              <DynamicPrompt>
                <PromptText>
                  选择第一个对象或
                  <PromptKey><Icon name="down" size={7} /></PromptKey>
                </PromptText>
                <PromptInput defaultValue="r" />
                <Caret />
              </DynamicPrompt>
              <Highlight />
              <UcsIcon viewBox="0 0 70 72" fill="none" stroke="#d8d8d8">
                <path d="M3.500 59.500h7v7h-7zM7.500 59V27M11 63.500h31M7.500 18L4 27h7zM51 63.500L42 60v7z" />
                <text x="57" y="68" fill="#c8c8c8" stroke="none" fontFamily="Liberation Sans" fontSize="13">X</text>
                <text x="4" y="13" fill="#c8c8c8" stroke="none" fontFamily="Liberation Sans" fontSize="13">Y</text>
              </UcsIcon>
            </Canvas>
            <TabRow>
              {['first', 'prev', 'next', 'last'].map((n) => (
                <TabArrow key={n} type="button" aria-label={n}><Icon name={n} size={9} /></TabArrow>
              ))}
              <SheetTab label="模型" active />
              <SheetTab label="布局1" />
              <SheetTab label="布局2" />
            </TabRow>
          </Center>
          <Dock>
            <Toolbar $vertical>
              <Grip $vertical />
              <Tools names={snapTools} vertical />
            </Toolbar>
          </Dock>
          <Dock>
            <Toolbar $vertical>
              <Grip $vertical />
              <GroupedTools groups={modifyTools} />
            </Toolbar>
            <Toolbar $vertical>
              <Grip $vertical />
              <Tools names={['front', 'back', 'above', 'under']} vertical />
            </Toolbar>
          </Dock>
        </Workspace>

        <CommandPane>
          <CommandGrip />
          <CommandBody>
            <CommandLine>
              <CommandText>当前设置: 模式 = 修剪，半径 = 50.0000</CommandText>
              <ScrollButtons>
                <ScrollButton type="button" aria-label="向上滚动"><Icon name="up" size={7} /></ScrollButton>
                <ScrollButton type="button" aria-label="向下滚动"><Icon name="down" size={7} /></ScrollButton>
              </ScrollButtons>
            </CommandLine>
            <CommandLine>
              <CommandInput aria-label="命令行" defaultValue="选择第一个对象或 [放弃(U)/多段线(P)/半径(R)/修剪(T)/多个(M)]:" />
              <ScrollButtons $wide>
                <ScrollButton type="button" aria-label="向右滚动"><Icon name="next" size={7} /></ScrollButton>
              </ScrollButtons>
            </CommandLine>
          </CommandBody>
        </CommandPane>

        <StatusBar>
          <Coordinates>666.4412,    651.4161,  0.0000</Coordinates>
          {toggles.map((t) => (
            <StatusToggle key={t.label} type="button" aria-pressed={!!t.on} $on={t.on} $latin={t.latin}>{t.label}</StatusToggle>
          ))}
          <Tray>
            <Icon name="down" size={9} />
            <Icon name="tray" size={12} />
          </Tray>
        </StatusBar>
      </Client>
    </Frame>
  );
}
